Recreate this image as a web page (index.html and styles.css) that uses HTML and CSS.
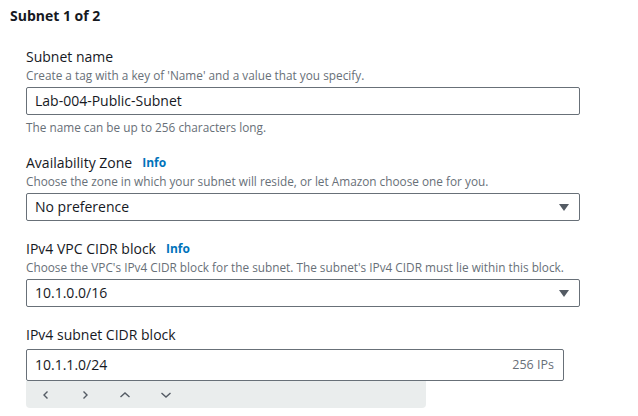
FILE: index.html
```html
<!DOCTYPE html>
<html>
<head>
<meta charset="utf-8">
<link rel="stylesheet" href="styles.css">
</head>
<body>
<div class="page">
  <h2 class="title">Subnet 1 of 2</h2>
  <div class="fields">
    <div class="field">
      <div class="label">Subnet name</div>
      <div class="desc">Create a tag with a key of 'Name' and a value that you specify.</div>
      <div class="input">Lab-004-Public-Subnet</div>
      <div class="hint">The name can be up to 256 characters long.</div>
    </div>
    <div class="field">
      <div class="label">Availability Zone <span class="info">Info</span></div>
      <div class="desc">Choose the zone in which your subnet will reside, or let Amazon choose one for you.</div>
      <div class="input select"><span>No preference</span><svg class="caret" width="10" height="7" viewBox="0 0 10 7"><path d="M0 0H10L5 7Z" fill="#545b64"/></svg></div>
    </div>
    <div class="field">
      <div class="label">IPv4 VPC CIDR block <span class="info">Info</span></div>
      <div class="desc">Choose the VPC's IPv4 CIDR block for the subnet. The subnet's IPv4 CIDR must lie within this block.</div>
      <div class="input select"><span>10.1.0.0/16</span><svg class="caret" width="10" height="7" viewBox="0 0 10 7"><path d="M0 0H10L5 7Z" fill="#545b64"/></svg></div>
    </div>
    <div class="field last">
      <div class="label">IPv4 subnet CIDR block</div>
      <div class="input cidr"><span>10.1.1.0/24</span><span class="ips">256 IPs</span></div>
      <div class="stepper">
        <svg width="10" height="10" viewBox="0 0 10 10"><path d="M6.5 1.5L3 5l3.5 3.5" fill="none" stroke="#545b64" stroke-width="1.4"/></svg>
        <svg width="10" height="10" viewBox="0 0 10 10"><path d="M3.5 1.5L7 5 3.5 8.5" fill="none" stroke="#545b64" stroke-width="1.4"/></svg>
        <svg width="12" height="10" viewBox="0 0 12 10"><path d="M1.5 7L6 3l4.5 4" fill="none" stroke="#545b64" stroke-width="1.4"/></svg>
        <svg width="12" height="10" viewBox="0 0 12 10"><path d="M1.5 3L6 7l4.5-4" fill="none" stroke="#545b64" stroke-width="1.4"/></svg>
      </div>
    </div>
  </div>
</div>
</body>
</html>
```
FILE: styles.css
```css
* { box-sizing: border-box; }
body {
  margin: 0;
  background: #fff;
  font-family: "Open Sans", "Noto Sans", sans-serif;
  color: #16191f;
}
.page {
  padding: 6px 0 0 10px;
}
.title {
  margin: 0;
  font-size: 14px;
  font-weight: 700;
  line-height: 20px;
}
.fields {
  padding: 21px 0 0 16px;
  width: 570px;
}
.field {
  margin-bottom: 18px;
}
.label {
  font-size: 14px;
  line-height: 20px;
  display: flex;
  align-items: center;
}
.info {
  color: #0073bb;
  font-size: 12px;
  font-weight: 700;
  margin-left: 10px;
}
.desc, .hint {
  font-size: 11.8px;
  line-height: 16px;
  color: #687078;
}
.desc { margin-bottom: 4px; }
.hint { margin-top: 4px; }
.input {
  width: 554px;
  height: 28px;
  border: 1px solid #687078;
  border-radius: 2px;
  font-size: 14px;
  line-height: 26px;
  padding: 0 8px;
  display: flex;
  align-items: center;
  justify-content: space-between;
}
.caret { margin-right: 2px; }
.cidr {
  width: 538px;
  height: 32px;
  margin-top: 4px;
}
.ips {
  font-size: 12.5px;
  color: #687078;
  margin-right: 1px;
}
.stepper {
  width: 400px;
  height: 27px;
  background: #eaeded;
  border-radius: 0 0 4px 4px;
  display: flex;
  align-items: center;
  gap: 29px;
  padding-left: 15px;
}
```
